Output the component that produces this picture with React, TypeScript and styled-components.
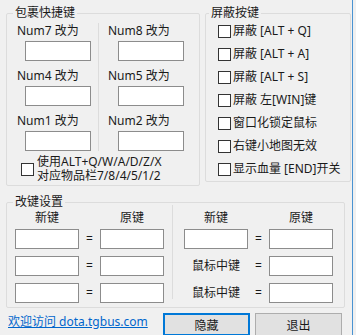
import React from 'react'
import styled, { createGlobalStyle } from 'styled-components'

const GlobalStyle = createGlobalStyle`
  html, body {
    margin: 0;
    padding: 0;
    background: #f0f0f0;
  }
  body {
    font-family: 'Noto Sans', 'Noto Sans CJK SC', sans-serif;
    font-size: 12px;
    color: #1a1a1a;
  }
`

const StyledWindow = styled.div`
  box-sizing: border-box;
  width: 353px;
  height: 335px;
  padding: 5px 0 0 6px;
  border-right: 1px solid #4a93d2;
  overflow: hidden;
  background: #f0f0f0;
`

const StyledTopRow = styled.div`
  display: flex;
  gap: 5px;
  align-items: flex-start;
`

const StyledGroup = styled.fieldset<{ $width: number; $height: number }>`
  box-sizing: border-box;
  width: ${(props) => props.$width}px;
  height: ${(props) => props.$height}px;
  margin: 0;
  padding: 0;
  min-width: 0;
  border: 1px solid #dcdcdc;
  border-radius: 2px;
`

const StyledLegend = styled.legend<{ $offset: number }>`
  padding: 0 2px;
  margin-left: ${(props) => props.$offset}px;
  line-height: 16px;
`

const StyledKeyArea = styled.div`
  padding: 2px 0 0 10px;
`

const StyledColumns = styled.div`
  display: flex;
`

const StyledKeyColumn = styled.div<{ $first?: boolean }>`
  display: flex;
  flex-direction: column;
  gap: 7px;
  width: ${(props) => (props.$first ? '81px' : 'auto')};
  padding-left: ${(props) => (props.$first ? 0 : 9)}px;
  border-right: ${(props) => (props.$first ? '1px solid #dcdcdc' : 'none')};
`

const StyledKeyCell = styled.div<{ $indent: number }>`
  display: flex;
  flex-direction: column;
  gap: 2px;
  line-height: 16px;

  input {
    margin-left: ${(props) => props.$indent}px;
  }
`

const StyledTextBox = styled.input`
  box-sizing: border-box;
  width: 66px;
  height: 20px;
  margin: 0;
  padding: 0 2px;
  border: 1px solid #8c8c8c;
  background: #fff;
  outline: none;
  font: inherit;
`

const StyledCheckBox = styled.span`
  flex: none;
  box-sizing: border-box;
  width: 13px;
  height: 13px;
  border: 1px solid #333;
  background: #fff;
`

const StyledItemCheck = styled.div`
  display: flex;
  align-items: center;
  gap: 3px;
  margin: 4px 0 0 4px;
`

const StyledCheckLines = styled.div`
  display: flex;
  flex-direction: column;
`

const StyledCheckLine = styled.div`
  height: 14px;
  line-height: 14px;
  white-space: nowrap;
`

const StyledBlockList = styled.div`
  display: flex;
  flex-direction: column;
  gap: 7px;
  padding: 2px 0 0 12px;
`

const StyledBlockRow = styled.div`
  display: flex;
  align-items: center;
  gap: 2px;
  line-height: 16px;
  white-space: nowrap;
`

const StyledRemap = styled.div`
  display: flex;
  padding-left: 8px;
`

const StyledRemapHalf = styled.div`
  display: grid;
  grid-template-columns: 64px 21px 64px;
  row-gap: 7px;
  align-items: center;
  justify-items: center;
  line-height: 16px;

  input {
    width: 64px;
  }
`

const StyledHeader = styled.div<{ $col: number }>`
  grid-column: ${(props) => props.$col};
  margin-bottom: -4px;
`

const StyledDivider = styled.div`
  width: 1px;
  margin: -5px 11px 4px 8px;
  background: #dcdcdc;
`

const StyledFooter = styled.div`
  display: flex;
  align-items: flex-start;
  margin-top: 5px;
  padding: 0 10px 0 2px;
`

const StyledLink = styled.a`
  color: #0066cc;
  text-decoration: underline;
  line-height: 18px;
  white-space: nowrap;
`

const StyledButtons = styled.div`
  display: flex;
  gap: 5px;
  margin-left: auto;
`

const StyledButton = styled.button<{ $focused?: boolean }>`
  box-sizing: border-box;
  width: 87px;
  height: 23px;
  margin: 0;
  padding: 0;
  font: inherit;
  color: #1a1a1a;
  background: #e1e1e1;
  border: 1px solid ${(props) => (props.$focused ? '#0078d7' : '#adadad')};
  box-shadow: ${(props) => (props.$focused ? 'inset 0 0 0 1px #0078d7' : 'none')};
`

const itemKeys = [
  ['Num7', 'Num8'],
  ['Num4', 'Num5'],
  ['Num1', 'Num2'],
]

const blockOptions = [
  '屏蔽 [ALT + Q]',
  '屏蔽 [ALT + A]',
  '屏蔽 [ALT + S]',
  '屏蔽 左[WIN]键',
  '窗口化锁定鼠标',
  '右键小地图无效',
  '显示血量 [END]开关',
]

const App = () => {
  return (
    <>
      <GlobalStyle />
      <StyledWindow>
        <StyledTopRow>
          <StyledGroup $width={194} $height={181}>
            <StyledLegend $offset={6}>包裹快捷键</StyledLegend>
            <StyledKeyArea>
              <StyledColumns>
                <StyledKeyColumn $first>
                  {itemKeys.map((row) => (
                    <StyledKeyCell key={row[0]} $indent={8}>
                      <span>{row[0]} 改为</span>
                      <StyledTextBox />
                    </StyledKeyCell>
                  ))}
                </StyledKeyColumn>
                <StyledKeyColumn>
                  {itemKeys.map((row) => (
                    <StyledKeyCell key={row[1]} $indent={10}>
                      <span>{row[1]} 改为</span>
                      <StyledTextBox />
                    </StyledKeyCell>
                  ))}
                </StyledKeyColumn>
              </StyledColumns>
              <StyledItemCheck>
                <StyledCheckBox />
                <StyledCheckLines>
                  <StyledCheckLine>使用ALT+Q/W/A/D/Z/X</StyledCheckLine>
                  <StyledCheckLine>对应物品栏7/8/4/5/1/2</StyledCheckLine>
                </StyledCheckLines>
              </StyledItemCheck>
            </StyledKeyArea>
          </StyledGroup>
          <StyledGroup $width={146} $height={177}>
            <StyledLegend $offset={3}>屏蔽按键</StyledLegend>
            <StyledBlockList>
              {blockOptions.map((text) => (
                <StyledBlockRow key={text}>
                  <StyledCheckBox />
                  <span>{text}</span>
                </StyledBlockRow>
              ))}
            </StyledBlockList>
          </StyledGroup>
        </StyledTopRow>
        <div style={{ marginTop: 8 }}>
          <StyledGroup $width={339} $height={114}>
            <StyledLegend $offset={6}>改键设置</StyledLegend>
            <StyledRemap>
              <StyledRemapHalf>
                <StyledHeader $col={1}>新键</StyledHeader>
                <StyledHeader $col={3}>原键</StyledHeader>
                {[0, 1, 2].map((i) => (
                  <React.Fragment key={i}>
                    <StyledTextBox />
                    <span>=</span>
                    <StyledTextBox />
                  </React.Fragment>
                ))}
              </StyledRemapHalf>
              <StyledDivider />
              <StyledRemapHalf>
                <StyledHeader $col={1}>新键</StyledHeader>
                <StyledHeader $col={3}>原键</StyledHeader>
                <StyledTextBox />
                <span>=</span>
                <StyledTextBox />
                <span>鼠标中键</span>
                <span>=</span>
                <StyledTextBox />
                <span>鼠标中键</span>
                <span>=</span>
                <StyledTextBox />
              </StyledRemapHalf>
            </StyledRemap>
          </StyledGroup>
        </div>
        <StyledFooter>
          <StyledLink href="#">欢迎访问 dota.tgbus.com</StyledLink>
          <StyledButtons>
            <StyledButton $focused>隐藏</StyledButton>
            <StyledButton>退出</StyledButton>
          </StyledButtons>
        </StyledFooter>
      </StyledWindow>
    </>
  )
}

export default App
